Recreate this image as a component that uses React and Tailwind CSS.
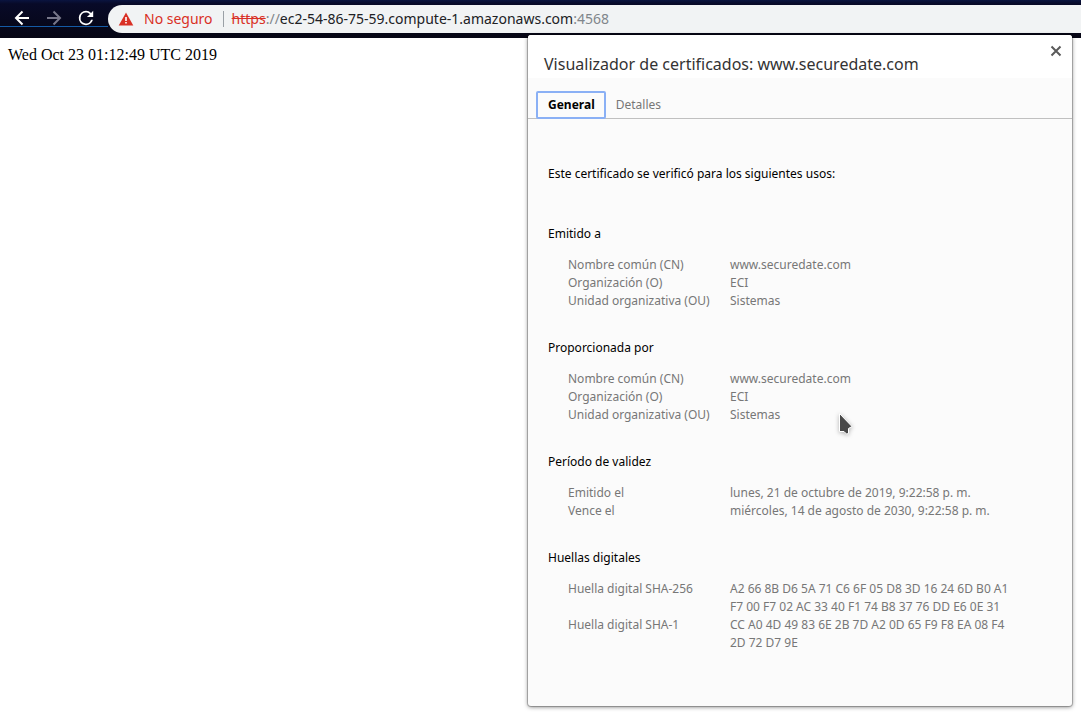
const noto = "font-['Noto_Sans',sans-serif]";

const sections = [
  {
    title: "Emitido a",
    rows: [
      ["Nombre común (CN)", "www.securedate.com"],
      ["Organización (O)", "ECI"],
      ["Unidad organizativa (OU)", "Sistemas"],
    ],
  },
  {
    title: "Proporcionada por",
    rows: [
      ["Nombre común (CN)", "www.securedate.com"],
      ["Organización (O)", "ECI"],
      ["Unidad organizativa (OU)", "Sistemas"],
    ],
  },
  {
    title: "Período de validez",
    rows: [
      ["Emitido el", "lunes, 21 de octubre de 2019, 9:22:58 p. m."],
      ["Vence el", "miércoles, 14 de agosto de 2030, 9:22:58 p. m."],
    ],
  },
  {
    title: "Huellas digitales",
    rows: [
      [
        "Huella digital SHA-256",
        "A2 66 8B D6 5A 71 C6 6F 05 D8 3D 16 24 6D B0 A1\nF7 00 F7 02 AC 33 40 F1 74 B8 37 76 DD E6 0E 31",
      ],
      [
        "Huella digital SHA-1",
        "CC A0 4D 49 83 6E 2B 7D A2 0D 65 F9 F8 EA 08 F4\n2D 72 D7 9E",
      ],
    ],
  },
];

function Toolbar() {
  return (
    <header className="flex h-[38px] items-start bg-linear-to-b from-[#0a1440] via-[#080a28] via-10% to-[#060614] pt-[5px]">
      <nav className="flex h-[22px] w-[108px] shrink-0 items-end gap-2 border-b border-[#145aa5] pl-2.5">
        <button type="button" aria-label="Atrás" className="-mb-1 size-6 text-white">
          <svg viewBox="0 0 24 24" className="size-6" fill="none" stroke="currentColor" strokeWidth="2">
            <path d="M19 12H6M12.5 5.5L6 12l6.500 6.500" />
          </svg>
        </button>
        <button type="button" aria-label="Adelante" className="-mb-1 size-6 text-[#77778a]">
          <svg viewBox="0 0 24 24" className="size-6" fill="none" stroke="currentColor" strokeWidth="2">
            <path d="M5 12h13M11.500 5.500L18 12l-6.500 6.500" />
          </svg>
        </button>
        <button type="button" aria-label="Recargar" className="-mb-1 size-6 text-white">
          <svg viewBox="0 0 24 24" className="size-6" fill="currentColor">
            <path d="M17.650 6.350A7.960 7.960 0 0 0 12 4a8 8 0 1 0 7.730 10h-2.080A6 6 0 1 1 12 6c1.660 0 3.140.690 4.220 1.780L13 11h7V4z" transform="translate(1.200 1.200) scale(.9)" />
          </svg>
        </button>
      </nav>
      <div className={`flex h-7 flex-1 items-center rounded-l-full bg-[#f1f3f4] pl-2.5 text-sm ${noto}`}>
        <svg viewBox="0 0 16 16" className="size-4" aria-hidden="true">
          <path d="M8 1.500L15.300 14.500H.7z" fill="#d93025" />
          <path d="M7.200 6h1.600v4H7.200zM7.200 11h1.600v1.600H7.200z" fill="#fff" />
        </svg>
        <span className="ml-2.5 text-[#d93025]">No seguro</span>
        <span className="ml-2.5 mr-2 h-4 w-px bg-[#9aa0a6]" />
        <div role="textbox" aria-label="Dirección" tabIndex={0} className="whitespace-nowrap text-[#80868b]">
          <span className="text-[#d93025] line-through">https</span>://
          <span className="text-[#202124]">ec2-54-86-75-59.compute-1.amazonaws.com</span>:4568
        </div>
      </div>
    </header>
  );
}

function Section({ title, rows }) {
  return (
    <section>
      <h2 className="text-black">{title}</h2>
      <dl className="mt-[13px] pl-5 text-[#777]">
        {rows.map(([label, value]) => (
          <div key={label} className="flex">
            <dt className="w-[162px] shrink-0">{label}</dt>
            <dd className="whitespace-pre-line">{value}</dd>
          </div>
        ))}
      </dl>
    </section>
  );
}

function CertificateDialog() {
  return (
    <div
      role="dialog"
      aria-labelledby="certificate-title"
      className={`absolute top-[35px] right-[9px] w-[544px] rounded-[3px] bg-[#fbfbfb] text-xs leading-[18px] shadow-[0_0_0_1px_rgba(0,0,0,0.2),0_1px_4px_rgba(0,0,0,0.5)] ${noto}`}
    >
      <div className="flex justify-between rounded-t-[3px] bg-white pr-2.5 pb-[3px] pl-4">
        <h1 id="certificate-title" className="pt-[18px] text-base leading-[22px] text-[#333]">
          Visualizador de certificados: www.securedate.com
        </h1>
        <button type="button" aria-label="Cerrar" className="mt-2.5 size-3">
          <svg viewBox="0 0 12 12" className="size-3" fill="none" stroke="#5a5a5a" strokeWidth="2">
            <path d="M1.500 1.500l9 9M10.500 1.500l-9 9" />
          </svg>
        </button>
      </div>
      <div role="tablist" className="flex border-b border-[#c0c0c0] px-2 pt-[13px]">
        <button
          type="button"
          role="tab"
          aria-selected="true"
          className="-mb-px h-7 rounded-[2px] border-2 border-[#8ab0f5] pl-2.5 pr-[9px] font-bold text-black"
        >
          General
        </button>
        <button type="button" role="tab" aria-selected="false" className="-mb-px h-7 px-2.5 text-[#777]">
          Detalles
        </button>
      </div>
      <div role="tabpanel" className="px-5 pt-[46px] pb-[54px]">
        <p className="text-black">Este certificado se verificó para los siguientes usos:</p>
        <div className="mt-[42px] flex flex-col gap-[29px]">
          {sections.map((section) => (
            <Section key={section.title} {...section} />
          ))}
        </div>
      </div>
      <svg
        viewBox="0 0 16 24"
        aria-hidden="true"
        className="absolute top-[377px] left-[310px] h-6 w-4 drop-shadow-[0_1px_2px_rgba(0,0,0,0.3)]"
      >
        <path d="M1.500 1.500V19.500H6l2.500 2.500 2-.5v-5l3.500-2z" fill="#484848" stroke="#fff" strokeWidth="1" />
      </svg>
    </div>
  );
}

export default function App() {
  return (
    <div className="relative min-h-screen bg-white">
      <Toolbar />
      <main className="p-2 font-['Liberation_Serif',serif] text-base leading-[18px] text-black">
        Wed Oct 23 01:12:49 UTC 2019
      </main>
      <CertificateDialog />
    </div>
  );
}
